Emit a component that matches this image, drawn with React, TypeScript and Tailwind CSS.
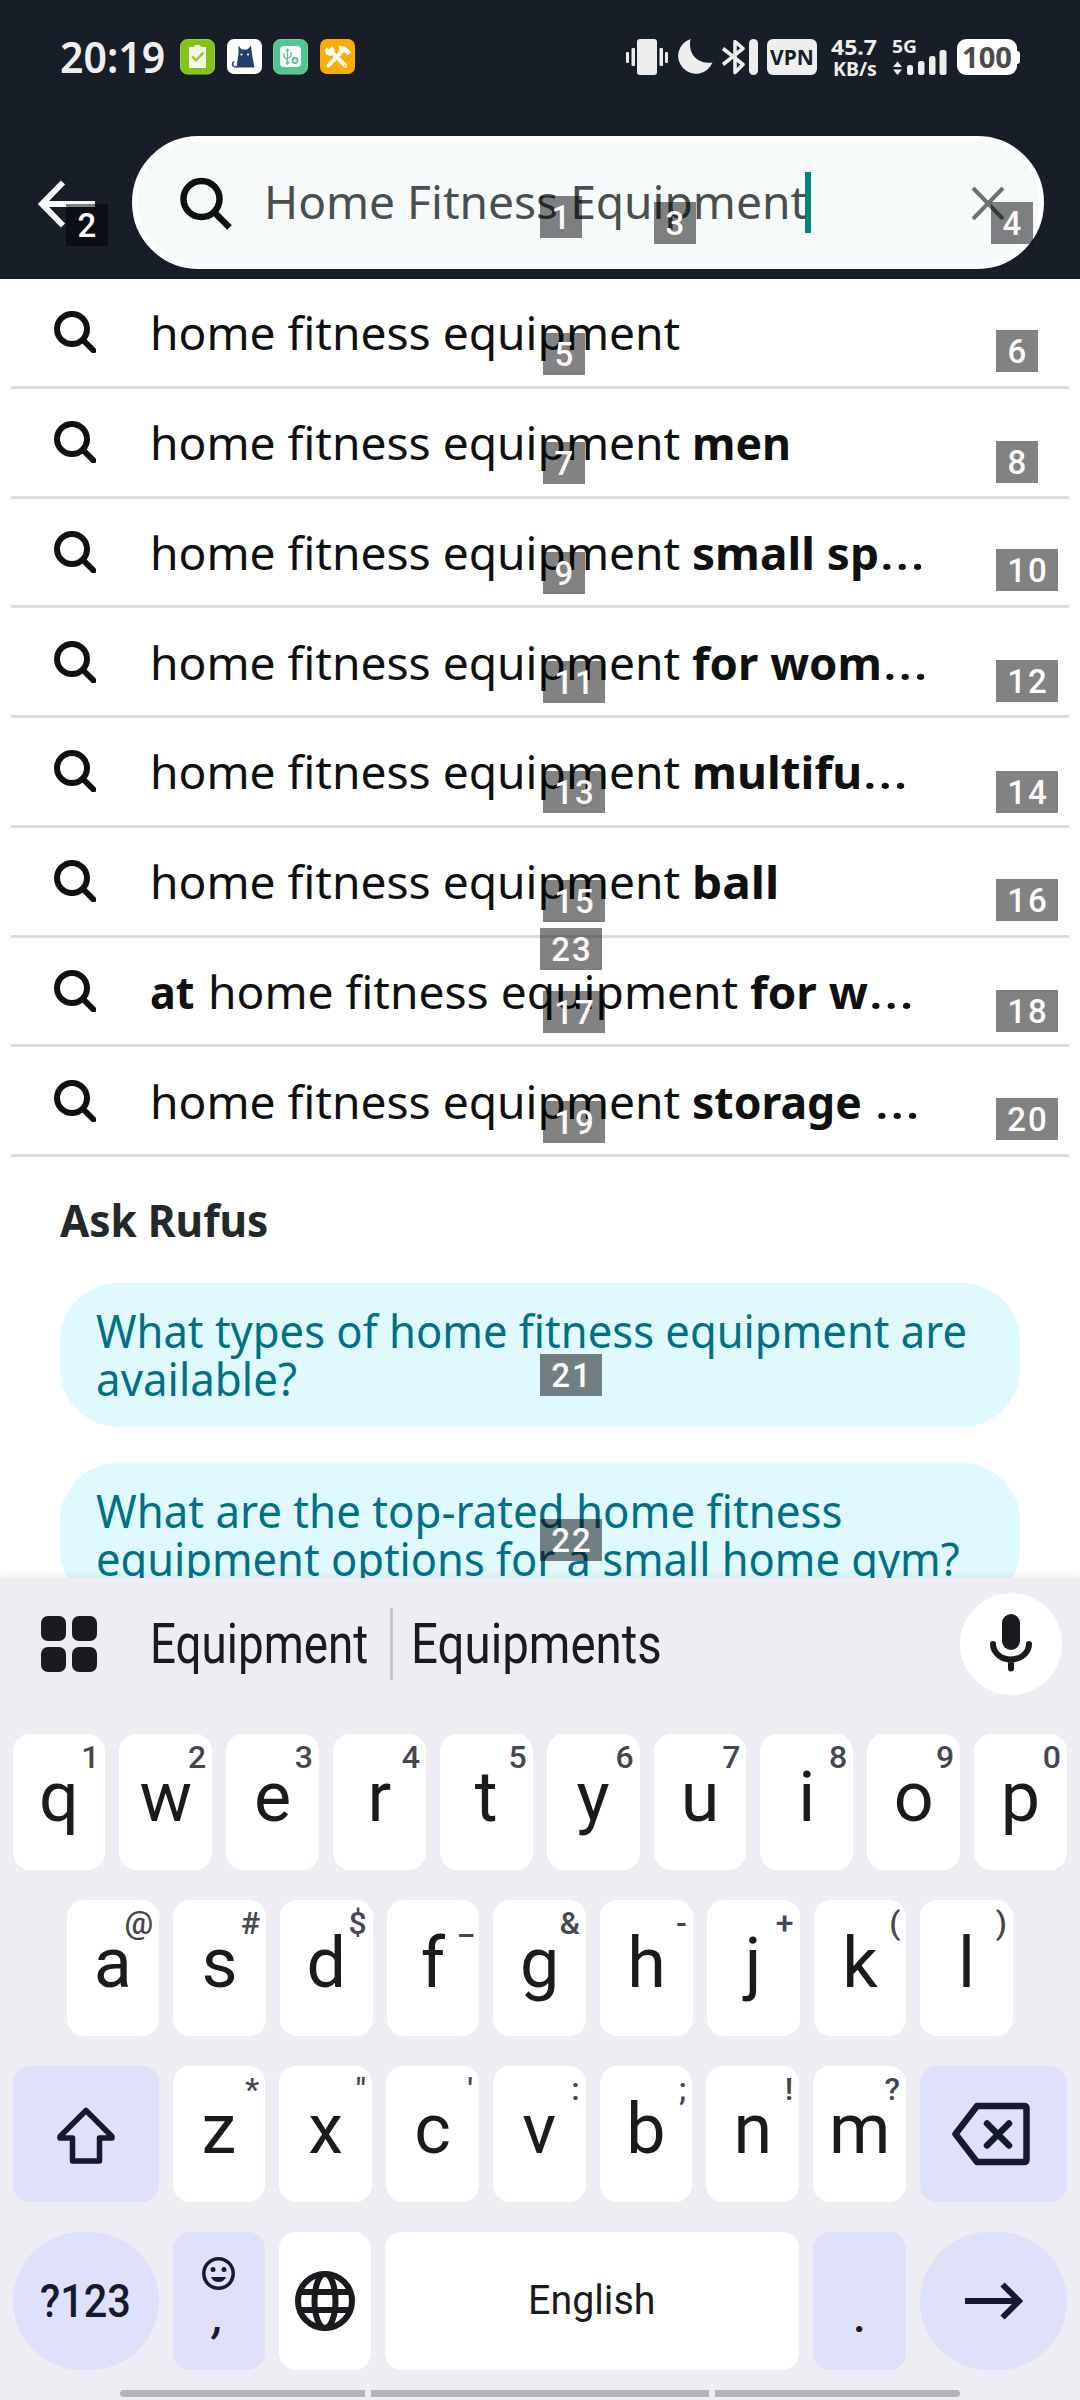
import { useLayoutEffect, useRef, useState, type ReactNode } from "react";

/* Text squeezed or stretched horizontally to fill the width given by its class. */
function Fit({ className = "", children }: { className?: string; children: ReactNode }) {
  const outer = useRef<HTMLSpanElement>(null);
  const inner = useRef<HTMLSpanElement>(null);
  const [scale, setScale] = useState(1);
  useLayoutEffect(() => {
    if (outer.current && inner.current) {
      setScale(outer.current.clientWidth / inner.current.offsetWidth);
    }
  }, []);
  return (
    <span ref={outer} className={`inline-block shrink-0 whitespace-pre ${className}`}>
      <span ref={inner} className="inline-block origin-left" style={{ transform: `scaleX(${scale})` }}>
        {children}
      </span>
    </span>
  );
}

function StatusBar() {
  return (
    <div className="flex h-9 items-start text-[#eeeeee]">
      <Fit className="mt-[0px] ml-[60px] w-[105px] text-[43px] leading-[36px] font-semibold">20:19</Fit>
      <svg className="ml-[15px] h-9 w-[176px]" viewBox="0 0 176 36">
        <rect x="0.5" y="0.5" width="34" height="34.5" rx="7" fill="#85c31a" stroke="#9ad03f" />
        <path d="M9 8h5l1-2h5l1 2h5v21H9z" fill="#f1f8e6" />
        <path d="M12 17.5l4 4 7.5-8" fill="none" stroke="#85c31a" strokeWidth="2" />
        <rect x="47" y="0" width="35" height="35" rx="7" fill="#fff" />
        <path d="M58.500 6.500l3 4h6l3.500-4 1 9 2.500 13h-18l2-14z" fill="#20406f" />
        <path d="M57 28c-6 0-5-4-3-5.500" fill="none" stroke="#20406f" strokeWidth="1.500" />
        <circle cx="61.500" cy="15.500" r="1.100" fill="#fff" />
        <circle cx="68" cy="15.500" r="1.100" fill="#fff" />
        <rect x="93.500" y="0.500" width="34" height="34.500" rx="7" fill="#53c58f" stroke="#74d0a5" />
        <rect x="100" y="7" width="21" height="21" rx="4" fill="#fff" />
        <g fill="none" stroke="#53c58f" strokeWidth="1.300">
          <path d="M107.500 11v13M104 14v4l3.500 3M111 13v4l-3.500 2.500" />
          <circle cx="115" cy="21.500" r="2.500" strokeWidth="1.800" />
        </g>
        <path d="M107.500 9l2 3h-4z" fill="#53c58f" />
        <circle cx="107.500" cy="24" r="1.700" fill="#53c58f" />
        <rect x="140" y="0" width="35" height="35" rx="7" fill="#fbad03" />
        <g stroke="#fff" fill="none" strokeWidth="4">
          <path d="M148.500 26.500l15-16" strokeLinecap="round" />
          <path d="M151 12.500l14 14" strokeLinecap="round" />
          <path d="M159 9.500q6-1 10 5.500" strokeWidth="4.500" />
        </g>
        <circle cx="150" cy="12" r="4.800" fill="#fff" />
        <path d="M144 6l5 4.500 2-2-3-4.500z" fill="#fbad03" />
        <circle cx="165" cy="26.500" r="1" fill="#fbad03" />
      </svg>
      <svg className="ml-[270px] h-9 w-[134px]" viewBox="0 0 134 36" fill="#eeeeee">
        <rect x="0" y="13" width="3" height="11" rx="1" />
        <rect x="5.500" y="9" width="3.500" height="18" rx="1" />
        <rect x="11" y="0" width="20" height="36" rx="3" />
        <rect x="33.500" y="9" width="3.500" height="18" rx="1" />
        <rect x="39" y="13" width="3" height="11" rx="1" />
        <path d="M64.500 0a17.800 17.800 0 1 0 22 23.500C76 25.500 61 19 64.500 0z" />
        <path d="M97 9.500l20 16-8 8V2.500l8 7-20 16" fill="none" stroke="#eeeeee" strokeWidth="3.600" strokeLinejoin="round" />
        <rect x="123" y="0" width="9" height="36" rx="4.500" />
      </svg>
      <div className="ml-[7px] flex h-9 w-[50px] items-center justify-center rounded-[6px] bg-[#eeeeee] text-[#171e27]">
        <Fit className="w-[44px] text-[21px] leading-none font-bold">VPN</Fit>
      </div>
      <div className="ml-[14px] flex w-[47px] flex-col">
        <Fit className="w-[46px] text-[21px] leading-[16px] font-bold">45.7</Fit>
        <Fit className="mt-[5px] ml-[2px] w-[44px] text-[20px] leading-[17px] font-bold">KB/s</Fit>
      </div>
      <div className="ml-[14px] flex w-[56px] flex-col">
        <Fit className="w-[25px] text-[18.500px] leading-[14px] font-bold">5G</Fit>
        <svg className="-mt-[3px] h-[25px] w-[56px]" viewBox="0 0 56 25" fill="#eeeeee">
          <path d="M5.500 11.500l4.500 5.500H1zM5.500 25l4.500-5.500H1z" />
          <rect x="15" y="15" width="6" height="10" rx="2.500" />
          <rect x="26" y="11" width="6.500" height="14" rx="2.500" />
          <rect x="37" y="6" width="6.500" height="19" rx="2.500" />
          <rect x="47.500" y="0" width="7" height="25" rx="2.500" />
        </svg>
      </div>
      <div className="ml-[9px] flex items-center">
        <div className="flex h-9 w-[60px] items-center justify-center rounded-[9px] bg-white text-[#4b4b4b]">
          <Fit className="w-[50px] text-[28px] leading-none font-bold">100</Fit>
        </div>
        <div className="h-[13px] w-[3px] rounded-r-[3px] bg-white" />
      </div>
    </div>
  );
}

function Header() {
  return (
    <header className="h-[279px] bg-[#171e27] pt-[39px]">
      <StatusBar />
      <div className="mt-[61px] flex h-[133px] items-center">
        <svg className="ml-[36px] h-[52px] w-[60px]" viewBox="0 0 60 52" fill="none" stroke="#f6fafa" strokeWidth="6">
          <path d="M59 27H7M27 5.500L6 27l21 21.500" />
        </svg>
        <div className="ml-9 flex h-[133px] w-[912px] items-center rounded-full border-[5px] border-white bg-[#f6fafb]">
          <svg className="ml-[42px] h-[54px] w-[54px]" viewBox="0 0 54 54" fill="none" stroke="#0f1111" strokeWidth="6.500">
            <circle cx="22.500" cy="23" r="18" />
            <path d="M35 36l15.500 15.500" />
          </svg>
          <Fit className="mb-[3px] ml-[31px] w-[543px] text-[46px] leading-none text-[#4a4e4e]">Home Fitness Equipment</Fit>
          <div className="-ml-[2px] h-[61px] w-[6px] bg-[#008577]" />
          <svg className="ml-[160px] h-[34px] w-[34px]" viewBox="0 0 34 34" stroke="#6f7272" strokeWidth="4">
            <path d="M2 2l30 31M32 2L2 33" />
          </svg>
        </div>
      </div>
    </header>
  );
}

const BASE = "home fitness equipment";
type Segment = { text: string; cls: string };
const suggestions: Segment[][] = [
  [{ text: BASE, cls: "w-[530px]" }],
  [{ text: BASE, cls: "w-[530px]" }, { text: "men", cls: "ml-[12px] w-[99px] font-bold" }],
  [
    { text: BASE, cls: "w-[530px]" },
    { text: "small sp", cls: "ml-[12px] w-[187px] font-bold" },
    { text: "…", cls: "w-[47px]" },
  ],
  [
    { text: BASE, cls: "w-[530px]" },
    { text: "for wom", cls: "ml-[12px] w-[190px] font-bold" },
    { text: "…", cls: "w-[47px]" },
  ],
  [
    { text: BASE, cls: "w-[530px]" },
    { text: "multifu", cls: "ml-[12px] w-[170px] font-bold" },
    { text: "…", cls: "w-[47px]" },
  ],
  [{ text: BASE, cls: "w-[530px]" }, { text: "ball", cls: "ml-[12px] w-[87px] font-bold" }],
  [
    { text: "at", cls: "w-[45px] font-bold" },
    { text: BASE, cls: "ml-[13px] w-[530px]" },
    { text: "for w", cls: "ml-[12px] w-[118px] font-bold" },
    { text: "…", cls: "w-[47px]" },
  ],
  [
    { text: BASE, cls: "w-[530px]" },
    { text: "storage", cls: "ml-[12px] w-[170px] font-bold" },
    { text: "…", cls: "ml-[12px] w-[47px]" },
  ],
];

function Suggestions() {
  return (
    <ul className="px-[11px]">
      {suggestions.map((segments, i) => (
        <li key={i} className="flex h-[109.75px] items-center border-b-[3px] border-[#dddddd] text-[45px] leading-none text-[#0f1111]">
          <svg className="mr-[54px] ml-[43px] h-[42px] w-[42px] shrink-0" viewBox="0 0 42 42" fill="none" stroke="#0f1111" strokeWidth="6">
            <circle cx="18" cy="18" r="15" />
            <path d="M29 29l10.500 10.500" strokeLinecap="round" />
          </svg>
          <div className="flex pt-[1px]">
            {segments.map((s, j) => (
              <Fit key={j} className={s.cls}>
                {s.text}
              </Fit>
            ))}
          </div>
        </li>
      ))}
    </ul>
  );
}

function Rufus() {
  return (
    <section className="h-[421px] overflow-hidden px-[60px] text-[45px]">
      <h2 className="flex pt-[33px] leading-[60px] font-bold text-[#232829]">
        <Fit className="w-[208px]">Ask Rufus</Fit>
      </h2>
      <div className="mt-[33px] flex h-[144px] flex-col rounded-[58px] bg-[#dff9ff] pt-6 pl-9 leading-[48px] text-[#007185]">
        <Fit className="w-[871px]">What types of home fitness equipment are</Fit>
        <Fit className="w-[201px]">available?</Fit>
      </div>
      <div className="mt-[36px] flex h-[144px] flex-col rounded-[58px] bg-[#dff9ff] pt-6 pl-9 leading-[48px] text-[#007185]">
        <Fit className="w-[746px]">What are the top-rated home fitness</Fit>
        <Fit className="w-[864px]">equipment options for a small home gym?</Fit>
      </div>
    </section>
  );
}

function Key({ label, hint }: { label: string; hint: string }) {
  return (
    <div className="relative h-[136px] min-w-0 flex-1 rounded-[17px] bg-white text-center text-[70px] leading-[126px] text-[#1b1b1f]">
      {label}
      <span className="absolute top-0 right-[6px] text-[32px] leading-[46px] font-medium text-[#46464f]">{hint}</span>
    </div>
  );
}

function Keys({ letters, hints }: { letters: string; hints: string }) {
  return (
    <>
      {letters.split("").map((l, i) => (
        <Key key={l} label={l} hint={hints[i]} />
      ))}
    </>
  );
}

function Keyboard() {
  return (
    <section className="h-[822px] bg-[#ededf3] font-[Roboto,sans-serif] text-[#1b1b1f] shadow-[0_-2px_8px_rgba(0,0,0,0.08)]">
      <div className="flex h-[156px] items-start">
        <svg className="mt-[38px] ml-[41px] h-[56px] w-[56px]" viewBox="0 0 56 56" fill="#1b1b1f">
          <rect width="25" height="25" rx="7" />
          <rect x="31" width="25" height="25" rx="7" />
          <rect y="31" width="25" height="25" rx="7" />
          <rect x="31" y="31" width="25" height="25" rx="7" />
        </svg>
        <Fit className="mt-[30px] ml-[53px] w-[218px] text-[55px] leading-[72px]">Equipment</Fit>
        <div className="mt-[30px] ml-[22px] h-[72px] w-[3px] bg-[#c7c6d0]" />
        <Fit className="mt-[30px] ml-[18px] w-[251px] text-[55px] leading-[72px]">Equipments</Fit>
        <div className="mt-[15px] mr-[18px] ml-auto flex h-[102px] w-[102px] justify-center rounded-full bg-white">
          <svg className="mt-[21px] h-[58px] w-[42px]" viewBox="0 0 42 58">
            <rect x="12" y="0" width="18" height="36" rx="9" fill="#1b1b1f" />
            <path d="M3 30a18 15.500 0 0 0 36 0M21 46v8.500" fill="none" stroke="#1b1b1f" strokeWidth="6" strokeLinecap="round" />
          </svg>
        </div>
      </div>
      <div className="flex flex-col gap-[30px] pr-[13px] pl-[12.500px]">
        <div className="flex gap-[14px]">
          <Keys letters="qwertyuiop" hints="1234567890" />
        </div>
        <div className="flex gap-[14px] px-[54px]">
          <Keys letters="asdfghjkl" hints="@#$_&-+()" />
        </div>
        <div className="flex gap-[14px]">
          <div className="h-[136px] w-[146px] rounded-[17px] bg-[#dfe0f9]">
            <svg className="mt-[40px] ml-[43px] h-[58px] w-[60px]" viewBox="0 0 60 58" fill="none" stroke="#151b2c" strokeWidth="5.500" strokeLinejoin="round">
              <path d="M30 4.500L4 30.500v1.500h12.500v23h27V32H56v-1.500z" />
            </svg>
          </div>
          <Keys letters="zxcvbnm" hints={"*\"':;!?"} />
          <div className="h-[136px] w-[147px] rounded-[17px] bg-[#dfe0f9]">
            <svg className="mt-[36px] ml-[31px] h-[64px] w-[80px]" viewBox="0 0 80 64" fill="none" stroke="#151b2c" strokeWidth="6.500" strokeLinejoin="round" strokeLinecap="round">
              <path d="M26 4h47q2.500 0 2.500 2.500v51q0 2.500-2.500 2.500H26L4.500 32z" />
              <path d="M36 21.500l22 22M58 21.500l-22 22" />
            </svg>
          </div>
        </div>
        <div className="flex gap-[14px] text-[#151b2c]">
          <div className="flex h-[138px] w-[146px] items-center justify-center rounded-full bg-[#dfe0f9]">
            <Fit className="w-[91px] text-[46px] leading-none font-medium">?123</Fit>
          </div>
          <div className="flex h-[138px] w-[92px] flex-col items-center rounded-[17px] bg-[#dfe0f9] pt-[25px]">
            <svg className="h-[33px] w-[33px]" viewBox="0 0 33 33">
              <circle cx="16.500" cy="16.500" r="14.700" fill="none" stroke="#151b2c" strokeWidth="3.500" />
              <circle cx="11" cy="12.500" r="2.500" fill="#151b2c" />
              <circle cx="22" cy="12.500" r="2.500" fill="#151b2c" />
              <path d="M9 20h15q-2 5-7.500 5T9 20z" fill="#151b2c" />
            </svg>
            <span className="mt-[3px] text-[46px] leading-[46px] font-medium italic">,</span>
          </div>
          <div className="flex h-[138px] w-[92px] items-center justify-center rounded-[17px] bg-white">
            <svg className="h-[60px] w-[60px]" viewBox="0 0 60 60" fill="none" stroke="#1b1b1f" strokeWidth="6">
              <circle cx="30" cy="30" r="27" />
              <ellipse cx="30" cy="30" rx="10.500" ry="27" />
              <path d="M5 21h50M5 39h50" />
            </svg>
          </div>
          <div className="flex h-[138px] flex-1 items-center justify-center rounded-[17px] bg-white text-[#1b1b1f]">
            <Fit className="w-[127px] text-[40px] leading-none">English</Fit>
          </div>
          <div className="flex h-[138px] w-[93px] flex-col items-center rounded-[17px] bg-[#dfe0f9] pt-[61px]">
            <span className="text-[46px] leading-[46px] font-medium">.</span>
          </div>
          <div className="flex h-[138px] w-[147px] items-center justify-center rounded-full bg-[#dfe0f9]">
            <svg className="h-[38px] w-[58px]" viewBox="0 0 58 38" fill="none" stroke="#151b2c" strokeWidth="6">
              <path d="M0 19h54M37.500 2.500L54 19 37.500 35.500" />
            </svg>
          </div>
        </div>
      </div>
      <div className="mt-[20px] flex gap-[6px] px-[120px]">
        <div className="h-[7px] w-[245px] rounded-l-full bg-[#b5b4ba]" />
        <div className="h-[7px] w-[338px] bg-[#b5b4ba]" />
        <div className="h-[7px] w-[245px] rounded-r-full bg-[#b5b4ba]" />
      </div>
    </section>
  );
}

/* Numbered element tags that float over the screen. */
const tags = [
  { n: 1, pos: "left-[540px] top-[196px] w-[42px]" },
  { n: 2, pos: "left-[66px] top-[204px] w-[42px]" },
  { n: 3, pos: "left-[654px] top-[202px] w-[42px]" },
  { n: 4, pos: "left-[991px] top-[202px] w-[42px]" },
  { n: 5, pos: "left-[543px] top-[333px] w-[42px]" },
  { n: 6, pos: "left-[996px] top-[330px] w-[42px]" },
  { n: 7, pos: "left-[543px] top-[442px] w-[42px]" },
  { n: 8, pos: "left-[996px] top-[441px] w-[42px]" },
  { n: 9, pos: "left-[543px] top-[552px] w-[42px]" },
  { n: 10, pos: "left-[996px] top-[549px] w-[62px]" },
  { n: 11, pos: "left-[543px] top-[661px] w-[62px]" },
  { n: 12, pos: "left-[996px] top-[660px] w-[62px]" },
  { n: 13, pos: "left-[543px] top-[771px] w-[62px]" },
  { n: 14, pos: "left-[996px] top-[771px] w-[62px]" },
  { n: 15, pos: "left-[543px] top-[880px] w-[62px]" },
  { n: 16, pos: "left-[996px] top-[879px] w-[62px]" },
  { n: 17, pos: "left-[543px] top-[991px] w-[62px]" },
  { n: 18, pos: "left-[996px] top-[990px] w-[62px]" },
  { n: 19, pos: "left-[543px] top-[1101px] w-[62px]" },
  { n: 20, pos: "left-[996px] top-[1098px] w-[62px]" },
  { n: 21, pos: "left-[540px] top-[1354px] w-[62px]" },
  { n: 22, pos: "left-[540px] top-[1519px] w-[62px]" },
  { n: 23, pos: "left-[540px] top-[928px] w-[62px]" },
];

export default function App() {
  return (
    <div className="relative h-[2400px] w-[1080px] overflow-hidden bg-white font-['Noto_Sans',sans-serif]">
      <Header />
      <Suggestions />
      <Rufus />
      <Keyboard />
      {tags.map((t) => (
        <span
          key={t.n}
          className={`absolute h-[42px] bg-black/49 pl-[2px] text-center font-[Roboto,sans-serif] text-[33px] leading-[44px] font-medium tracking-[2px] text-[#fffafa] ${t.pos}`}
        >
          {t.n}
        </span>
      ))}
    </div>
  );
}
